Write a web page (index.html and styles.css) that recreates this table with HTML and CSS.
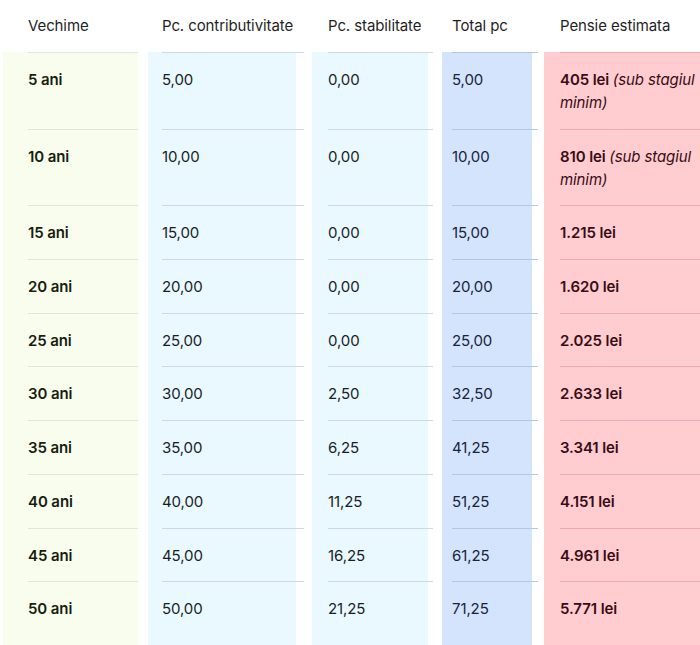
FILE: index.html
```html
<!DOCTYPE html>
<html lang="ro">
<head>
<meta charset="utf-8">
<title>Pensie estimata</title>
<link rel="stylesheet" href="styles.css">
</head>
<body>
<div class="table">
  <div class="row head">
    <div class="cell c1">Vechime</div>
    <div class="cell c2">Pc. contributivitate</div>
    <div class="cell c3">Pc. stabilitate</div>
    <div class="cell c4">Total pc</div>
    <div class="cell c5">Pensie estimata</div>
  </div>
  <div class="row">
    <div class="cell c1">5 ani</div>
    <div class="cell c2">5,00</div>
    <div class="cell c3">0,00</div>
    <div class="cell c4">5,00</div>
    <div class="cell c5">405 lei <em>(sub stagiul</em> <em>minim)</em></div>
  </div>
  <div class="row">
    <div class="cell c1">10 ani</div>
    <div class="cell c2">10,00</div>
    <div class="cell c3">0,00</div>
    <div class="cell c4">10,00</div>
    <div class="cell c5">810 lei <em>(sub stagiul</em> <em>minim)</em></div>
  </div>
  <div class="row">
    <div class="cell c1">15 ani</div>
    <div class="cell c2">15,00</div>
    <div class="cell c3">0,00</div>
    <div class="cell c4">15,00</div>
    <div class="cell c5">1.215 lei</div>
  </div>
  <div class="row">
    <div class="cell c1">20 ani</div>
    <div class="cell c2">20,00</div>
    <div class="cell c3">0,00</div>
    <div class="cell c4">20,00</div>
    <div class="cell c5">1.620 lei</div>
  </div>
  <div class="row">
    <div class="cell c1">25 ani</div>
    <div class="cell c2">25,00</div>
    <div class="cell c3">0,00</div>
    <div class="cell c4">25,00</div>
    <div class="cell c5">2.025 lei</div>
  </div>
  <div class="row">
    <div class="cell c1">30 ani</div>
    <div class="cell c2">30,00</div>
    <div class="cell c3">2,50</div>
    <div class="cell c4">32,50</div>
    <div class="cell c5">2.633 lei</div>
  </div>
  <div class="row">
    <div class="cell c1">35 ani</div>
    <div class="cell c2">35,00</div>
    <div class="cell c3">6,25</div>
    <div class="cell c4">41,25</div>
    <div class="cell c5">3.341 lei</div>
  </div>
  <div class="row">
    <div class="cell c1">40 ani</div>
    <div class="cell c2">40,00</div>
    <div class="cell c3">11,25</div>
    <div class="cell c4">51,25</div>
    <div class="cell c5">4.151 lei</div>
  </div>
  <div class="row">
    <div class="cell c1">45 ani</div>
    <div class="cell c2">45,00</div>
    <div class="cell c3">16,25</div>
    <div class="cell c4">61,25</div>
    <div class="cell c5">4.961 lei</div>
  </div>
  <div class="row">
    <div class="cell c1">50 ani</div>
    <div class="cell c2">50,00</div>
    <div class="cell c3">21,25</div>
    <div class="cell c4">71,25</div>
    <div class="cell c5">5.771 lei</div>
  </div>
  <div class="row tail">
    <div class="cell c1"></div>
    <div class="cell c2"></div>
    <div class="cell c3"></div>
    <div class="cell c4"></div>
    <div class="cell c5"></div>
  </div>
</div>
</body>
</html>
```

FILE: styles.css
```css
html, body {
  margin: 0;
  padding: 0;
  background: #ffffff;
}
body {
  width: 700px;
  height: 645px;
  overflow: hidden;
  font-family: "Inter", "Noto Sans", "Liberation Sans", sans-serif;
  font-size: 15px;
  color: #1f1f1f;
}
.table {
  isolation: isolate;
  padding-left: 28px;
}
.row {
  display: flex;
  align-items: stretch;
}
.cell {
  position: relative;
  box-sizing: border-box;
  flex: none;
  line-height: 23px;
  padding: 15px 0 14.7px;
  border-top: 1px solid #d9dce1;
  letter-spacing: -0.1px;
}
.cell::before {
  content: "";
  position: absolute;
  top: -1px;
  bottom: 0;
  z-index: -1;
}
.c1 { width: 110px; }
.c2 { width: 142px; margin-left: 24px; }
.c3 { width: 105px; margin-left: 24px; }
.c4 { width: 86px; margin-left: 19px; }
.c5 { width: 140px; margin-left: 22px; }

.c1 { font-weight: 600; color: #181d10; border-top-color: #e2e5d7; }
.c1::before { left: -25px; right: 0; background: #f8fdee; }

.c2 { color: #181e26; border-top-color: #cfd8e1; }
.c2::before { left: -14px; right: 8px; background: #eaf8ff; }

.c3 { color: #181e26; border-top-color: #cfd8e1; }
.c3::before { left: -16px; right: 5px; background: #eaf8ff; }

.c4 { color: #18233d; border-top-color: #b4c7e2; }
.c4::before { left: -10px; right: 6px; background: #d3e4fc; }

.c5 { font-weight: 600; color: #380c14; border-top-color: #f1a8ad; }
.c5::before { left: -16px; right: 0; background: #ffcdd0; }
.c5 em { font-weight: 400; font-style: italic; }

.head .cell {
  border-top: none;
  padding: 14px 0 15px;
  font-weight: 400;
  color: #1f1f1f;
}
.head .cell::before { display: none; }

.tail .cell {
  border-top: none;
  padding: 0;
  height: 20px;
}
.tail .cell::before { top: 0; }
```
